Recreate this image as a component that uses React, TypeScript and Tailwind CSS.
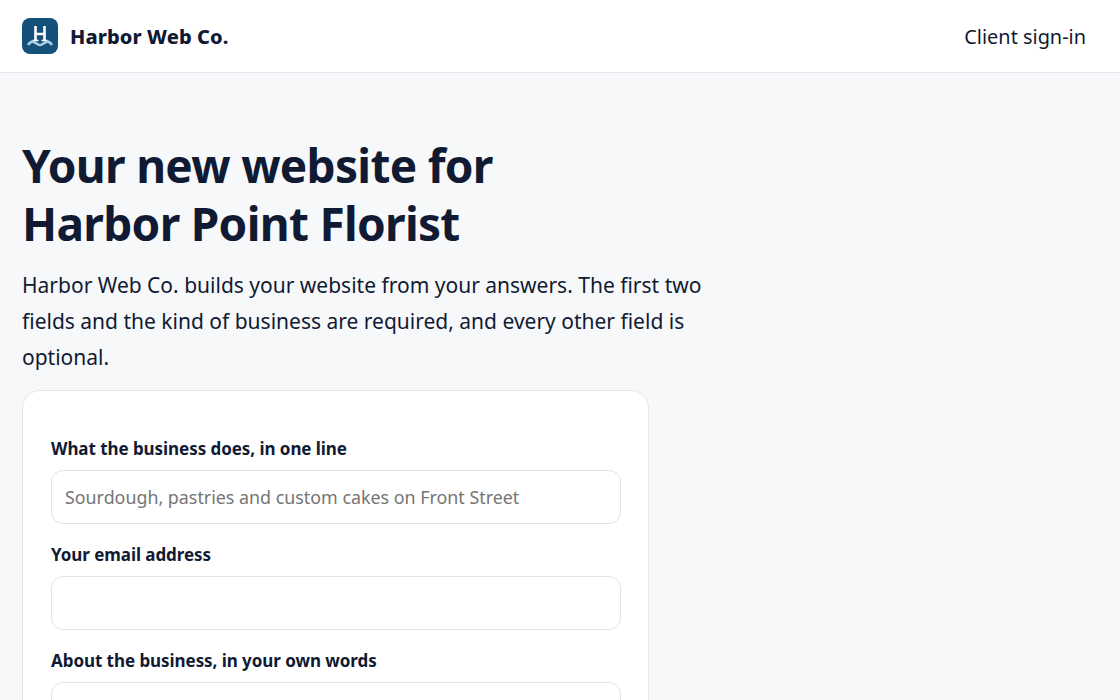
export default function App() {
  return (
    <div className="min-h-screen overflow-hidden bg-[#f7f8fa] font-['Noto_Sans',sans-serif] text-[#111a33]">
      <header className="flex h-[73px] items-center justify-between border-b border-[#e5e7eb] bg-white pr-[34px] pl-[22px]">
        <div className="flex items-center gap-[12px]">
          <svg width="36" height="36" viewBox="0 0 36 36">
            <rect width="36" height="36" rx="8" fill="#14507a" />
            <path d="M13.500 8v14M22.500 8v14M13.500 16H22.500" stroke="#fff" strokeWidth="2.600" fill="none" />
            <path d="M10.500 22.500h6M19.500 22.500h6" stroke="#fff" strokeWidth="1.400" fill="none" />
            <path d="M6 27C8 24 10 23 12 24C14 25 16 27 18 27C20 27 22 25 24 24C26 23 28 24 30 27" stroke="#a6cfe6" strokeWidth="2.600" fill="none" />
          </svg>
          <span className="pt-[2px] text-[20px] font-extrabold tracking-[0.1px]">Harbor Web Co.</span>
        </div>
        <a className="pt-[2px] text-[19.9px]">Client sign-in</a>
      </header>
      <main className="px-[22px] pt-[63px]">
        <h1 className="text-[46px] leading-[58px] font-bold tracking-[-0.7px]">
          Your new website for
          <br />
          Harbor Point Florist
        </h1>
        <p className="mt-[15px] max-w-[700px] text-[21px] leading-[36px]">
          Harbor Web Co. builds your website from your answers. The first two fields and the kind of business are required, and every other field is optional.
        </p>
        <form className="mt-[15px] w-[627px] rounded-[18px] border border-[#e5e7eb] bg-white pt-[46px] pr-[27px] pb-[28px] pl-[28px]">
          <label className="block text-[17px] leading-[24px] font-bold tracking-[-0.06px]">What the business does, in one line</label>
          <input
            className="mt-[9px] h-[54px] w-full rounded-[12px] border border-[#e0e3e8] px-[13px] text-[17.85px] placeholder:text-[#757575]"
            placeholder="Sourdough, pastries and custom cakes on Front Street"
          />
          <label className="mt-[19px] block text-[17px] leading-[24px] font-bold tracking-[-0.06px]">Your email address</label>
          <input className="mt-[9px] h-[54px] w-full rounded-[12px] border border-[#e0e3e8] px-[13px] text-[17.85px]" />
          <label className="mt-[19px] block text-[17px] leading-[24px] font-bold tracking-[-0.06px]">About the business, in your own words</label>
          <textarea className="mt-[9px] block h-[120px] w-full rounded-[12px] border border-[#e0e3e8] px-[13px]" />
        </form>
      </main>
    </div>
  );
}
